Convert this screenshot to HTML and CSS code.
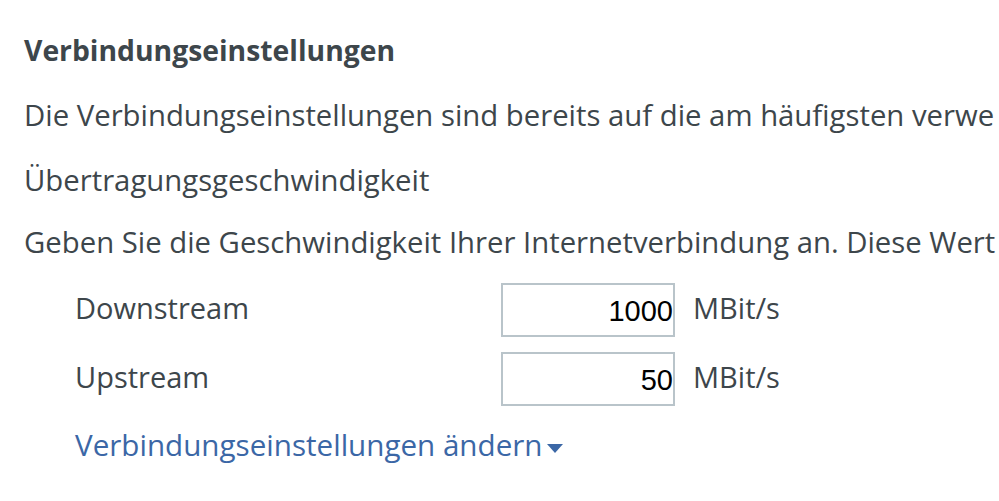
FILE: index.html
```html
<!DOCTYPE html>
<html lang="de">
<head>
<meta charset="utf-8">
<title>Verbindungseinstellungen</title>
<link rel="stylesheet" href="styles.css">
</head>
<body>
<main class="page">
  <h2 class="title">Verbindungseinstellungen</h2>
  <p class="line l2">Die Verbindungseinstellungen sind bereits auf die am häufigsten verwe</p>
  <p class="line l3">Übertragungsgeschwindigkeit</p>
  <p class="line l4">Geben Sie die Geschwindigkeit Ihrer Internetverbindung an. Diese Wert</p>
  <div class="rows">
    <div class="row">
      <label class="label" for="down">Downstream</label>
      <input class="field" id="down" type="text" value="1000">
      <span class="unit">MBit/s</span>
    </div>
    <div class="row">
      <label class="label" for="up">Upstream</label>
      <input class="field" id="up" type="text" value="50">
      <span class="unit">MBit/s</span>
    </div>
  </div>
  <a class="toggle" href="#">Verbindungseinstellungen ändern<span class="caret"></span></a>
</main>
</body>
</html>
```
FILE: styles.css
```css
html, body {
  margin: 0;
  padding: 0;
  background: #ffffff;
}
body {
  width: 999px;
  height: 501px;
  overflow: hidden;
  font-family: "Open Sans", Lato, sans-serif;
  color: #3d464b;
}
.page {
  padding: 30px 0 0 24px;
}
.title {
  margin: 0;
  font-size: 28.3px;
  font-weight: 700;
  line-height: 40px;
}
.line {
  margin: 25px 0 0;
  font-size: 29.3px;
  line-height: 40px;
  white-space: nowrap;
  overflow: hidden;
}
.l4 {
  margin-top: 22px;
}
.rows {
  margin-top: 21px;
  padding-left: 51px;
  display: flex;
  flex-direction: column;
  gap: 15px;
}
.row {
  display: flex;
  align-items: center;
  height: 54px;
}
.label {
  width: 426px;
  padding-bottom: 5px;
  font-size: 29px;
}
.field {
  box-sizing: border-box;
  width: 174px;
  height: 54px;
  margin: 0;
  border: 2px solid #b9c4ca;
  border-radius: 0;
  padding: 3px 0 0 4px;
  text-align: right;
  font-family: "Liberation Sans", Arial, sans-serif;
  font-size: 29px;
  color: #000000;
  background: #ffffff;
  outline: none;
}
.unit {
  margin-left: 18px;
  padding-bottom: 5px;
  font-size: 29px;
}
.toggle {
  display: inline-flex;
  align-items: center;
  margin: 19px 0 0 51px;
  font-size: 29.6px;
  line-height: 40px;
  color: #3b67a6;
  text-decoration: none;
}
.caret {
  width: 0;
  height: 0;
  margin-left: 4px;
  margin-top: 6px;
  border-left: 8px solid transparent;
  border-right: 8px solid transparent;
  border-top: 9px solid #3b67a6;
}
```
